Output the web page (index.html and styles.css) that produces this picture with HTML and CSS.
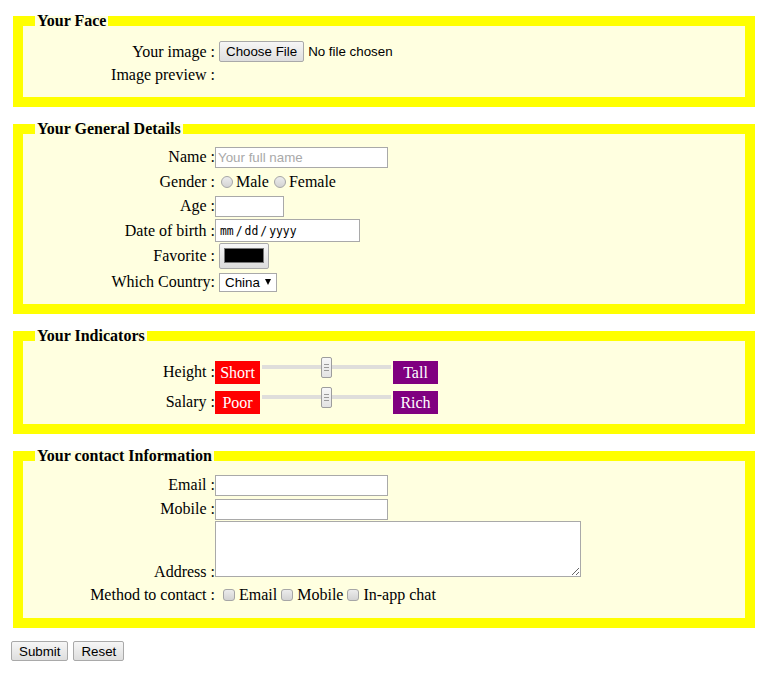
FILE: index.html
```html
<!DOCTYPE html>
<html>
<head>
<meta charset="utf-8">
<title>Form</title>
<link rel="stylesheet" href="styles.css">
</head>
<body>
<form class="page">
  <fieldset class="box">
    <legend class="box-title">Your Face</legend>
    <div class="rows rows-face">
      <div class="row row-23"><label class="lbl" for="img">Your image :</label><input id="img" type="file" class="file"></div>
      <div class="row row-24"><span class="lbl">Image preview :</span></div>
    </div>
  </fieldset>

  <fieldset class="box">
    <legend class="box-title">Your General Details</legend>
    <div class="rows rows-general">
      <div class="row row-24"><label class="lbl" for="name">Name :</label><input id="name" type="text" class="text text-wide" placeholder="Your full name"></div>
      <div class="row row-25"><span class="lbl">Gender :</span><input type="radio" name="g" id="gm" class="radio"><label for="gm" class="opt">Male</label><input type="radio" name="g" id="gf" class="radio radio-next"><label for="gf" class="opt">Female</label></div>
      <div class="row row-24"><label class="lbl" for="age">Age :</label><input id="age" type="text" class="text text-age"></div>
      <div class="row row-25"><label class="lbl" for="dob">Date of birth :</label><input id="dob" type="date" class="date"></div>
      <div class="row row-26"><label class="lbl" for="fav">Favorite :</label><input id="fav" type="color" class="color" value="#000000"></div>
      <div class="row row-26"><label class="lbl" for="country">Which Country:</label><span class="select-wrap"><select id="country" class="select"><option>China</option><option>India</option><option>USA</option></select></span></div>
    </div>
  </fieldset>

  <fieldset class="box">
    <legend class="box-title">Your Indicators</legend>
    <div class="rows rows-ind">
      <div class="row row-30"><span class="lbl">Height :</span><span class="tag tag-low">Short</span><input type="range" class="range" min="0" max="100" value="50"><span class="tag tag-high">Tall</span></div>
      <div class="row row-30"><span class="lbl">Salary :</span><span class="tag tag-low">Poor</span><input type="range" class="range" min="0" max="100" value="50"><span class="tag tag-high">Rich</span></div>
    </div>
  </fieldset>

  <fieldset class="box">
    <legend class="box-title">Your contact Information</legend>
    <div class="rows rows-contact">
      <div class="row row-24"><label class="lbl" for="email">Email :</label><input id="email" type="email" class="text text-wide"></div>
      <div class="row row-24"><label class="lbl" for="mobile">Mobile :</label><input id="mobile" type="tel" class="text text-wide"></div>
      <div class="row row-60 row-top"><label class="lbl lbl-bottom" for="addr">Address :</label><textarea id="addr" class="area"></textarea></div>
      <div class="row row-28"><span class="lbl">Method to contact :</span><input type="checkbox" id="m1" class="check check-first"><label for="m1" class="opt">Email</label><input type="checkbox" id="m2" class="check"><label for="m2" class="opt">Mobile</label><input type="checkbox" id="m3" class="check"><label for="m3" class="opt">In-app chat</label></div>
    </div>
  </fieldset>

  <div class="actions">
    <button type="submit" class="btn">Submit</button>
    <button type="reset" class="btn">Reset</button>
  </div>
</form>
</body>
</html>
```
FILE: styles.css
```css
html, body {
  margin: 0;
  padding: 0;
  background: #ffffff;
}

body {
  font-family: "Liberation Serif", "Times New Roman", serif;
  font-size: 16px;
  color: #000;
}

.page {
  padding: 12px 0 0 11px;
  margin: 0;
}

.box {
  margin: 0 26px 13px 2px;
  padding: 0 12px;
  border: 10px solid #ffff00;
  background: #ffffe0;
  min-width: 0;
}

.box-title {
  font-weight: bold;
  font-size: 16px;
  line-height: 18px;
  padding: 0 2px;
}

.rows-face { padding: 10px 0 10px; }
.rows-general { padding: 7px 0 9px; }
.rows-ind { padding: 12px 0 7px; }
.rows-contact { padding: 8px 0 9px; }

.row {
  display: flex;
  align-items: center;
  line-height: 18px;
}
.row-23 { height: 23px; }
.row-24 { height: 24px; }
.row-25 { height: 25px; }
.row-26 { height: 26px; }
.row-28 { height: 28px; }
.row-30 { height: 30px; }
.row-60 { height: 60px; }
.row-top { align-items: flex-start; }

.lbl {
  flex: none;
  width: 180px;
  text-align: right;
  line-height: 18px;
  white-space: nowrap;
}
.lbl-bottom { align-self: flex-end; }

.opt {
  white-space: nowrap;
}

/* text inputs */
.text, .area, .date {
  box-sizing: border-box;
  margin: 0;
  border: 1px solid #a9a9a9;
  background: #fff;
  font-family: "Liberation Sans", Arial, sans-serif;
  font-size: 13.333px;
  color: #000;
  border-radius: 0;
  outline: none;
}
.text {
  height: 21px;
  padding: 1px 2px;
}
.text::placeholder {
  color: #a9a9a9;
}
.text-wide { width: 173px; }
.text-age { width: 69px; }

.area {
  width: 366px;
  height: 56px;
  padding: 2px;
  resize: both;
}

.date {
  width: 145px;
  height: 23px;
  padding: 0 3px;
  font-family: "DejaVu Sans Mono", "Liberation Mono", monospace;
  font-size: 11.4px;
}
.date::-webkit-calendar-picker-indicator {
  display: none;
}
.date::-webkit-datetime-edit {
  padding: 0;
}
.date::-webkit-datetime-edit-text {
  padding: 0 1px;
}

/* file input */
.file {
  margin: 0 0 0 4px;
  font-family: "Liberation Sans", Arial, sans-serif;
  font-size: 13.333px;
  color: #000;
}
.file::file-selector-button {
  box-sizing: border-box;
  height: 21px;
  margin: 0 4px 0 0;
  padding: 1px 6px;
  font-family: "Liberation Sans", Arial, sans-serif;
  font-size: 13.333px;
  color: #000;
  border: 1px solid #a9a9a9;
  border-radius: 2px;
  background: linear-gradient(#f6f6f6, #dedede);
}

/* radios and checkboxes */
.radio, .check {
  -webkit-appearance: none;
  appearance: none;
  box-sizing: border-box;
  width: 12px;
  height: 12px;
  border: 1px solid #a6a6a6;
  background: linear-gradient(#ececec, #d3d3d3);
  flex: none;
}
.radio {
  border-radius: 50%;
  margin: 0 3px 0 6px;
}
.radio-next { margin-left: 5px; }
.check {
  border-radius: 3px;
  margin: 0 4px 0 4px;
}
.check-first { margin-left: 8px; }

/* color */
.color {
  -webkit-appearance: none;
  appearance: none;
  box-sizing: border-box;
  width: 50px;
  height: 26px;
  margin: 0 0 0 4px;
  padding: 4px 4px 5px;
  border: 1px solid #a9a9a9;
  border-radius: 2px;
  background: linear-gradient(#f7f7f7, #dcdcdc);
  cursor: pointer;
}
.color::-webkit-color-swatch-wrapper {
  padding: 0;
}
.color::-webkit-color-swatch {
  border: 1px solid #777;
  border-radius: 0;
}

/* select */
.select-wrap {
  position: relative;
  display: inline-block;
  margin-left: 4px;
  line-height: 0;
}
.select-wrap::after {
  content: "";
  position: absolute;
  right: 6px;
  top: 6px;
  width: 0;
  height: 0;
  border-left: 3.5px solid transparent;
  border-right: 3.5px solid transparent;
  border-top: 6px solid #000;
  pointer-events: none;
}
.select {
  -webkit-appearance: none;
  appearance: none;
  box-sizing: border-box;
  width: 58px;
  height: 19px;
  margin: 0;
  padding: 0 0 0 5px;
  border: 1px solid #a9a9a9;
  border-radius: 0;
  background: #fff;
  font-family: "Liberation Sans", Arial, sans-serif;
  font-size: 13.333px;
  color: #000;
  line-height: 17px;
}

/* indicators */
.tag {
  flex: none;
  width: 45px;
  height: 23px;
  line-height: 23px;
  text-align: center;
  color: #fff;
}
.tag-low { background: #ff0000; }
.tag-high { background: #800080; }

.range {
  -webkit-appearance: none;
  appearance: none;
  width: 129px;
  height: 21px;
  margin: 0 2px 11px;
  padding: 0;
  background: transparent;
}
.range::-webkit-slider-runnable-track {
  height: 4px;
  background: #dfdedb;
  border: none;
}
.range::-webkit-slider-thumb {
  -webkit-appearance: none;
  appearance: none;
  box-sizing: border-box;
  width: 11px;
  height: 21px;
  margin-top: -8px;
  border: 1px solid #9d9d9d;
  border-radius: 2px;
  background:
    linear-gradient(#9a9a9a, #9a9a9a) 50% 6px / 5px 1px no-repeat,
    linear-gradient(#9a9a9a, #9a9a9a) 50% 9px / 5px 1px no-repeat,
    linear-gradient(#9a9a9a, #9a9a9a) 50% 12px / 5px 1px no-repeat,
    linear-gradient(#f7f7f7, #e3e3e3);
}

/* buttons */
.actions {
  display: flex;
  gap: 5px;
}
.btn {
  box-sizing: border-box;
  height: 20px;
  margin: 0;
  padding: 1px 7px;
  font-family: "Liberation Sans", Arial, sans-serif;
  font-size: 13.333px;
  color: #000;
  border: 1px solid #a9a9a9;
  border-radius: 2px;
  background: linear-gradient(#f6f6f6, #dedede);
}
```
